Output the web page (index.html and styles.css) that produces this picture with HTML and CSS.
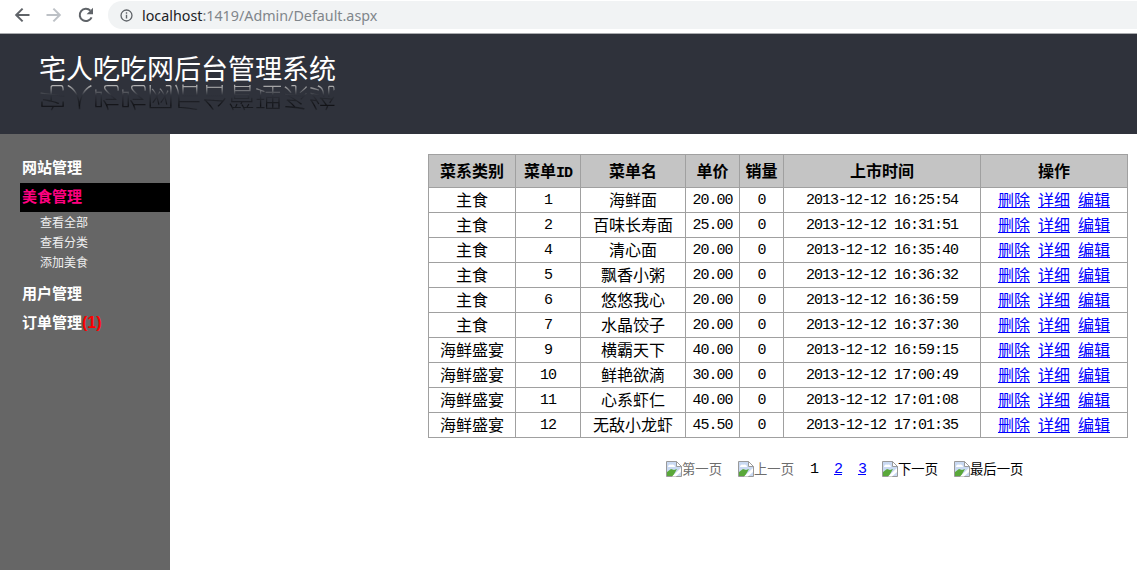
FILE: index.html
```html
<!DOCTYPE html>
<html>

<head>
    <meta charset="utf-8">
    <title>宅人吃吃网后台管理系统</title>
    <link rel="stylesheet" href="styles.css">
</head>

<body>
    <div class="toolbar">
        <svg class="nav-icon" viewBox="0 0 16 16"><path d="M15.5 8H2.5M8.6 1.6 2.2 8l6.4 6.4" fill="none" stroke="#5f6368" stroke-width="2"/></svg>
        <svg class="nav-icon" viewBox="0 0 16 16"><path d="M.5 8h13M7.4 1.6 13.8 8l-6.4 6.4" fill="none" stroke="#bdc1c6" stroke-width="2"/></svg>
        <svg class="nav-icon" viewBox="0 0 16 16"><path d="M13.6 10.4A6.2 6.2 0 1 1 12.4 3.6" fill="none" stroke="#5f6368" stroke-width="2"/><path d="M15 .8v6.4H8.6z" fill="#5f6368"/></svg>
        <div class="address">
            <svg class="info-icon" viewBox="0 0 14 14"><circle cx="7" cy="7" r="5.9" fill="none" stroke="#5f6368" stroke-width="1.4"/><path d="M7 6.2v4M7 3.6v1.4" stroke="#5f6368" stroke-width="1.5"/></svg>
            <span class="host">localhost</span><span class="path">:1419/Admin/Default.aspx</span>
        </div>
    </div>

    <div class="header">
        <div class="logo" data-mirror="宅人吃吃网后台管理系统">宅人吃吃网后台管理系统</div>
    </div>

    <div class="main">
        <div class="sidebar">
            <div class="menu-title top">网站管理</div>
            <div class="menu-title top active">美食管理</div>
            <ul class="submenu">
                <li>查看全部</li>
                <li>查看分类</li>
                <li>添加美食</li>
            </ul>
            <div class="menu-title">用户管理</div>
            <div class="menu-title">订单管理<span class="count">(1)</span></div>
        </div>

        <div class="content">
            <table class="list">
                <colgroup>
                    <col class="c1"><col class="c2"><col class="c3"><col class="c4"><col class="c5"><col class="c6"><col class="c7">
                </colgroup>
                <tr><th>菜系类别</th><th>菜单<span class="num">ID</span></th><th>菜单名</th><th>单价</th><th>销量</th><th>上市时间</th><th>操作</th></tr>
                <tr><td>主食</td><td class="num">1</td><td>海鲜面</td><td class="num">20.00</td><td class="num">0</td><td class="num">2013-12-12 16:25:54</td><td><a href="#">删除</a><a href="#">详细</a><a href="#">编辑</a></td></tr>
                <tr><td>主食</td><td class="num">2</td><td>百味长寿面</td><td class="num">25.00</td><td class="num">0</td><td class="num">2013-12-12 16:31:51</td><td><a href="#">删除</a><a href="#">详细</a><a href="#">编辑</a></td></tr>
                <tr><td>主食</td><td class="num">4</td><td>清心面</td><td class="num">20.00</td><td class="num">0</td><td class="num">2013-12-12 16:35:40</td><td><a href="#">删除</a><a href="#">详细</a><a href="#">编辑</a></td></tr>
                <tr><td>主食</td><td class="num">5</td><td>飘香小粥</td><td class="num">20.00</td><td class="num">0</td><td class="num">2013-12-12 16:36:32</td><td><a href="#">删除</a><a href="#">详细</a><a href="#">编辑</a></td></tr>
                <tr><td>主食</td><td class="num">6</td><td>悠悠我心</td><td class="num">20.00</td><td class="num">0</td><td class="num">2013-12-12 16:36:59</td><td><a href="#">删除</a><a href="#">详细</a><a href="#">编辑</a></td></tr>
                <tr><td>主食</td><td class="num">7</td><td>水晶饺子</td><td class="num">20.00</td><td class="num">0</td><td class="num">2013-12-12 16:37:30</td><td><a href="#">删除</a><a href="#">详细</a><a href="#">编辑</a></td></tr>
                <tr><td>海鲜盛宴</td><td class="num">9</td><td>横霸天下</td><td class="num">40.00</td><td class="num">0</td><td class="num">2013-12-12 16:59:15</td><td><a href="#">删除</a><a href="#">详细</a><a href="#">编辑</a></td></tr>
                <tr><td>海鲜盛宴</td><td class="num">10</td><td>鲜艳欲滴</td><td class="num">30.00</td><td class="num">0</td><td class="num">2013-12-12 17:00:49</td><td><a href="#">删除</a><a href="#">详细</a><a href="#">编辑</a></td></tr>
                <tr><td>海鲜盛宴</td><td class="num">11</td><td>心系虾仁</td><td class="num">40.00</td><td class="num">0</td><td class="num">2013-12-12 17:01:08</td><td><a href="#">删除</a><a href="#">详细</a><a href="#">编辑</a></td></tr>
                <tr><td>海鲜盛宴</td><td class="num">12</td><td>无敌小龙虾</td><td class="num">45.50</td><td class="num">0</td><td class="num">2013-12-12 17:01:35</td><td><a href="#">删除</a><a href="#">详细</a><a href="#">编辑</a></td></tr>
            </table>

            <div class="pager">
                <span class="page disabled"><svg class="broken" viewBox="0 0 16 16"><use href="#broken-img"/></svg>第一页</span>
                <span class="page disabled"><svg class="broken" viewBox="0 0 16 16"><use href="#broken-img"/></svg>上一页</span>
                <span class="page num">1</span>
                <a class="page num" href="#">2</a>
                <a class="page num" href="#">3</a>
                <span class="page"><svg class="broken" viewBox="0 0 16 16"><use href="#broken-img"/></svg>下一页</span>
                <span class="page"><svg class="broken" viewBox="0 0 16 16"><use href="#broken-img"/></svg>最后一页</span>
            </div>
        </div>
    </div>

    <svg class="defs" width="0" height="0">
        <symbol id="broken-img" viewBox="0 0 16 16">
            <path d="M.5.5h10l5 5v10H.5z" fill="#c9d9f2" stroke="#9a9a9a"/>
            <path d="M10.5.5v5h5z" fill="#fff" stroke="#9a9a9a"/>
            <path d="M2 6c0-2 2-3 3-2 2-1 4 0 4 2z" fill="#fff"/>
            <path d="M1 15v-4l4-3 3 1 3-1-4 7z" fill="#5aa83a"/>
            <path d="M6 15.5 15 7v4l-5 4.5z" fill="#fff"/>
        </symbol>
    </svg>
</body>

</html>
```

FILE: styles.css
```css
html {
    height: 100%;
}

body {
    margin: 0;
    height: 100%;
    display: flex;
    flex-direction: column;
    overflow: hidden;
    background: white;
    font-family: "Noto Sans CJK SC", sans-serif;
}

.toolbar {
    height: 34px;
    border-bottom: 1px solid #a9abae;
    display: flex;
    align-items: flex-start;
    padding: 1px 0 0 14px;
    box-sizing: border-box;
    flex: none;
}

.nav-icon {
    width: 16px;
    height: 16px;
    margin: 6px 16px 0 0;
    flex: none;
}

.address {
    flex: 1;
    height: 28px;
    margin-left: -2px;
    padding-left: 12px;
    display: flex;
    align-items: center;
    background: #f1f3f4;
    border-radius: 14px 0 0 14px;
    font-family: "Noto Sans", sans-serif;
    font-size: 14.3px;
}

.info-icon {
    width: 13px;
    height: 13px;
    margin-right: 9px;
}

.host {
    color: #202124;
}

.path {
    color: #80868b;
}

.header {
    height: 100px;
    flex: none;
    padding: 19px 0 0 39px;
    box-sizing: border-box;
    background: #2f323b;
}

.logo {
    position: relative;
    width: 297px;
    font-size: 27px;
    line-height: 30px;
    height: 30px;
    color: white;
}

/* the mirrored title under the logo, fades out and then goes dark */
.logo::after {
    content: attr(data-mirror);
    position: absolute;
    top: 100%;
    left: 0;
    width: 100%;
    height: 30px;
    transform: scaleY(-1);
    color: transparent;
    font-weight: 300;
    background: linear-gradient(to top, #b4b4b4 8%, #2f323b 40%, #121317 75%, #2f323b 100%);
    background-clip: text;
    -webkit-background-clip: text;
}

.main {
    flex: 1;
    display: flex;
    min-height: 0;
}

.sidebar {
    width: 170px;
    flex: none;
    padding: 20px 0 0 20px;
    box-sizing: border-box;
    background: #666666;
}

.menu-title {
    height: 29px;
    line-height: 27px;
    padding-left: 2px;
    color: white;
    font-size: 15px;
    font-weight: bold;
}

.menu-title.top {
    line-height: 25px;
}

.menu-title.active {
    background: black;
    color: #ff0080;
}

.count {
    color: #ff0000;
    font-family: "Liberation Sans", sans-serif;
    font-size: 16px;
}

.submenu {
    list-style: none;
    margin: 0;
    padding: 0 0 7px 20px;
    color: #f0f0f0;
    font-size: 12px;
    line-height: 20px;
}

.content {
    flex: 1;
    padding: 20px 0 0 258px;
    color: black;
}

.list {
    table-layout: fixed;
    width: 700px;
    border-collapse: collapse;
    font-size: 16px;
}

.c1 { width: 87px; }
.c2 { width: 65px; }
.c3 { width: 105px; }
.c4 { width: 54px; }
.c5 { width: 44px; }
.c6 { width: 197px; }
.c7 { width: 147px; }

.list th,
.list td {
    border: 1px solid #a0a0a0;
    padding: 0;
    text-align: center;
    white-space: nowrap;
}

.list th {
    height: 30px;
    padding-bottom: 2px;
    background: #c4c4c4;
    font-weight: bold;
}

.list td {
    height: 22px;
    line-height: 22px;
    padding-bottom: 2px;
}

.list td.num {
    height: 23px;
    line-height: 23px;
    padding: 1px 0 0;
}

.list a {
    margin: 0 4px;
    color: #0000ff;
}

.num {
    font-family: "Liberation Mono", monospace;
    font-size: 15px;
    letter-spacing: -1px;
}

.pager {
    display: flex;
    align-items: center;
    gap: 16px;
    margin-top: 22px;
    padding-left: 238px;
    font-size: 13.33px;
    line-height: 16px;
}

.page {
    display: flex;
    align-items: center;
    color: black;
}

.page.num {
    margin-top: 2px;
}

a.page {
    color: #0000ff;
    text-decoration: underline;
}

.disabled {
    color: #6d6d6d;
}

.broken {
    width: 16px;
    height: 16px;
    flex: none;
}

.defs {
    position: absolute;
}
```
